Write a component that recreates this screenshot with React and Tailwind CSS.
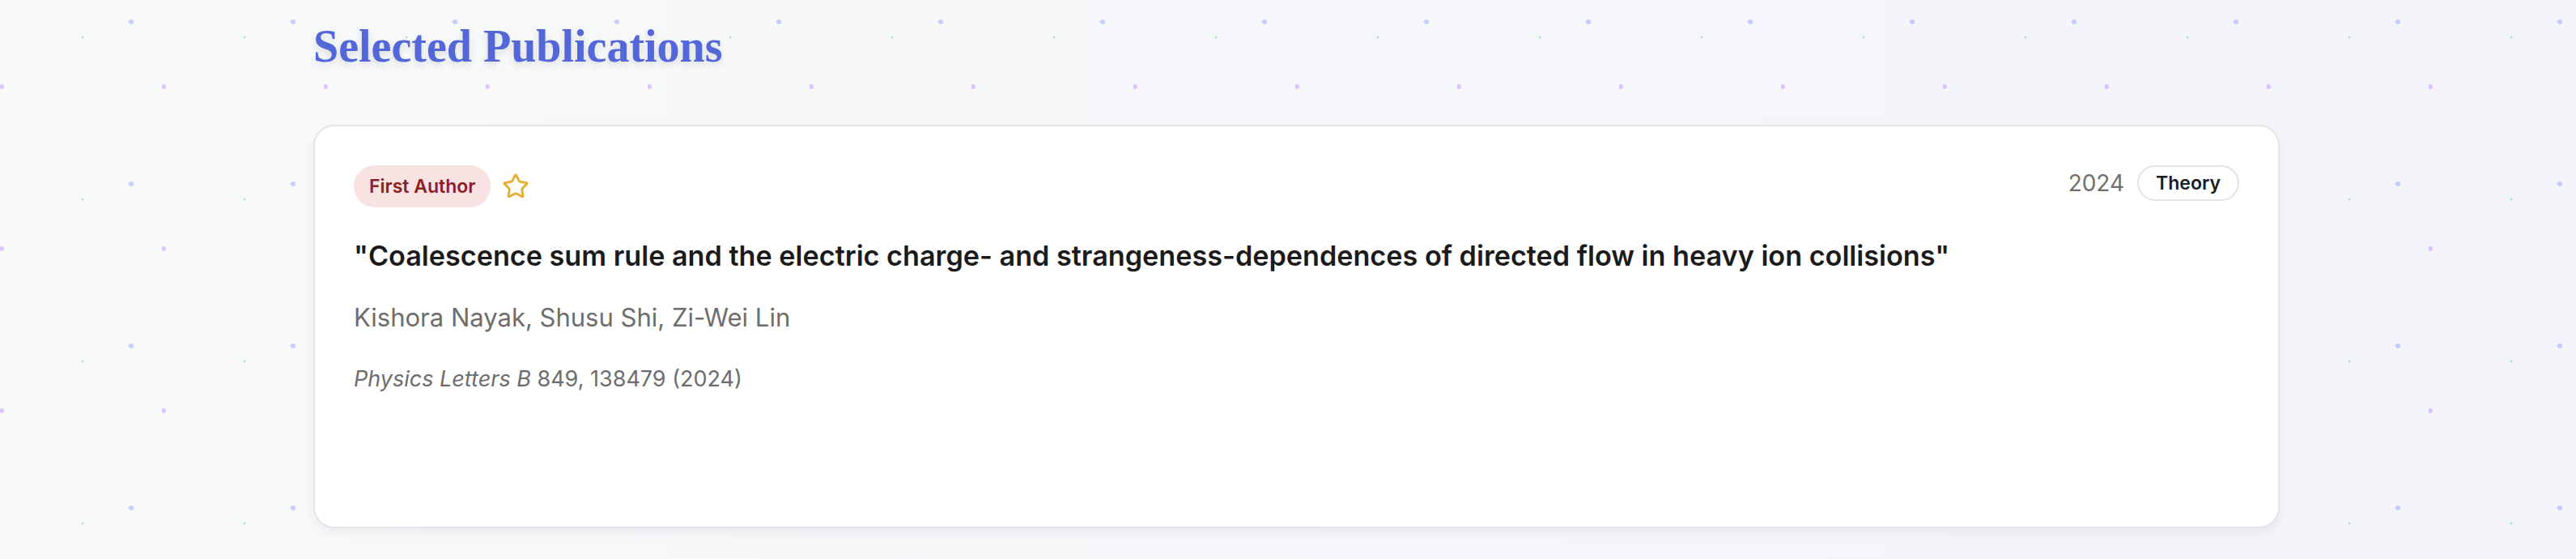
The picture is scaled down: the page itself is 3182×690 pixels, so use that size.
import { Star } from 'lucide-react';

const pub = {
  title:
    '"Coalescence sum rule and the electric charge- and strangeness-dependences of directed flow in heavy ion collisions"',
  authors: 'Kishora Nayak, Shusu Shi, Zi-Wei Lin',
  journal: 'Physics Letters B',
  ref: '849, 138479 (2024)',
  year: 2024,
  tag: 'Theory',
};

function PubCard({ p }) {
  return (
    <div className="h-[498px] w-[2429px] rounded-[26px] border-2 border-[#e4e5e9] bg-white p-[48px] shadow-[0_6px_14px_rgba(15,23,42,0.05)]">
      <div className="flex items-start justify-between">
        <div className="flex items-center gap-[14px]">
          <span className="flex h-[52px] items-center rounded-full bg-[#f8e2e2] px-[19px] text-[23px] font-semibold text-[#8c211e]">
            First Author
          </span>
          <Star size={34} strokeWidth={2} className="text-[#e4b032]" />
        </div>
        <div className="flex items-center gap-[16px]">
          <span className="text-[28px] text-[#6f6f6f]">{p.year}</span>
          <span className="rounded-full border-2 border-[#e3e3e3] px-[21px] py-[4px] text-[23px] font-semibold leading-[32px] text-[#1c1c1c]">
            {p.tag}
          </span>
        </div>
      </div>
      <h3 className="mt-[32px] text-[34.2px] font-semibold leading-[56px] text-[#1b1b1b]">{p.title}</h3>
      <p className="mt-[24px] text-[31px] leading-[48px] text-[#6d6d6d]">{p.authors}</p>
      <p className="mt-[32px] text-[27px] leading-[40px] text-[#6d6d6d]">
        <span className="italic">{p.journal}</span> {p.ref}
      </p>
    </div>
  );
}

export default function App() {
  return (
    <div className="min-h-[690px] w-full bg-[#f6f7f9] font-['Inter',sans-serif] [background-image:radial-gradient(circle_at_162px_27px,rgba(99,120,241,0.32)_2.5px,transparent_3.5px),radial-gradient(circle_at_2px_107px,rgba(168,85,247,0.3)_2.5px,transparent_3.5px),radial-gradient(circle_at_102px_46px,rgba(34,197,94,0.3)_1px,transparent_2px),linear-gradient(to_right,#f8f9fa,#f3f4f8)] [background-size:200px_200px,200px_200px,200px_200px,100%_100%]">
      <div className="pl-[387px] pt-[29px]">
        <h2 className="mb-[69px] font-['Liberation_Serif',serif] text-[56px] font-bold leading-none text-[#5467d9] [text-shadow:0_4px_8px_rgba(0,0,0,0.12)]">
          Selected Publications
        </h2>
        <PubCard p={pub} />
      </div>
    </div>
  );
}
